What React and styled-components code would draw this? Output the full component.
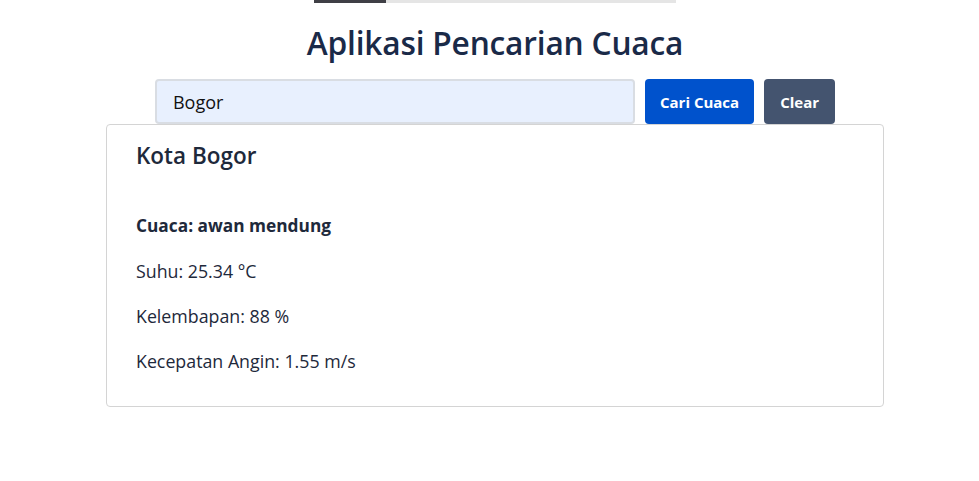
import React from 'react';
import styled, { createGlobalStyle } from 'styled-components';

const Global = createGlobalStyle`
body {
  margin: 0;
  background: #ffffff;
  font-family: "Open Sans", "Noto Sans", sans-serif;
  color: #1e293b;
}
`;

const Page = styled.div`
display: flex;
flex-direction: column;
align-items: center;
padding-left: 11px;
`;

const Progress = styled.div`
width: 362px;
height: 3px;
background: #e5e5e5;
`;

const ProgressFill = styled.div`
height: 100%;
background: #3f3f46;
`;

const Title = styled.h1`
margin: 19px 0 0;
font-size: 31.7px;
font-weight: 600;
letter-spacing: -0.2px;
color: #1a2a48;
line-height: 42px;
`;

const SearchRow = styled.div`
display: flex;
gap: 10px;
margin-top: 15px;
`;

const Input = styled.input`
width: 480px;
height: 45px;
box-sizing: border-box;
padding: 0 16px;
background: #e8f0fe;
border: 2px solid #d9dde3;
border-radius: 4px;
font-family: inherit;
font-size: 18px;
color: #111;
outline: none;
`;

const Button = styled.button`
height: 45px;
padding: 0 ${props => props.pad}px;
border: none;
border-radius: 4px;
background: ${props => props.bg};
color: #ffffff;
font-family: inherit;
font-size: 15px;
font-weight: 700;
cursor: pointer;
`;

const Card = styled.div`
width: 778px;
box-sizing: border-box;
border: 1px solid #d4d4d4;
border-radius: 4px;
padding: 16px 29px 32px;
`;

const City = styled.h2`
margin: 0 0 42px;
font-size: 22.5px;
font-weight: 600;
line-height: 30px;
`;

const Line = styled.p`
margin: 0 0 ${props => props.last ? 0 : 19}px;
font-size: ${props => props.bold ? 17.3 : 17.8}px;
line-height: 26px;
font-weight: ${props => props.bold ? 700 : 400};
`;

const weather = {
  kota: 'Bogor',
  cuaca: 'awan mendung',
  suhu: 25.34,
  kelembapan: 88,
  angin: 1.55,
};

export default function App() {
  const progress = 20;
  return (
    <Page>
      <Global />
      <Progress>
        <ProgressFill style={{ width: `${progress}%` }} />
      </Progress>
      <Title>Aplikasi Pencarian Cuaca</Title>
      <SearchRow>
        <Input defaultValue={weather.kota} />
        <Button bg="#0052cc" pad={15}>Cari Cuaca</Button>
        <Button bg="#44546f" pad={16}>Clear</Button>
      </SearchRow>
      <Card>
        <City>Kota {weather.kota}</City>
        <Line bold>Cuaca: {weather.cuaca}</Line>
        <Line>Suhu: {weather.suhu} °C</Line>
        <Line>Kelembapan: {weather.kelembapan} %</Line>
        <Line last>Kecepatan Angin: {weather.angin} m/s</Line>
      </Card>
    </Page>
  );
}
